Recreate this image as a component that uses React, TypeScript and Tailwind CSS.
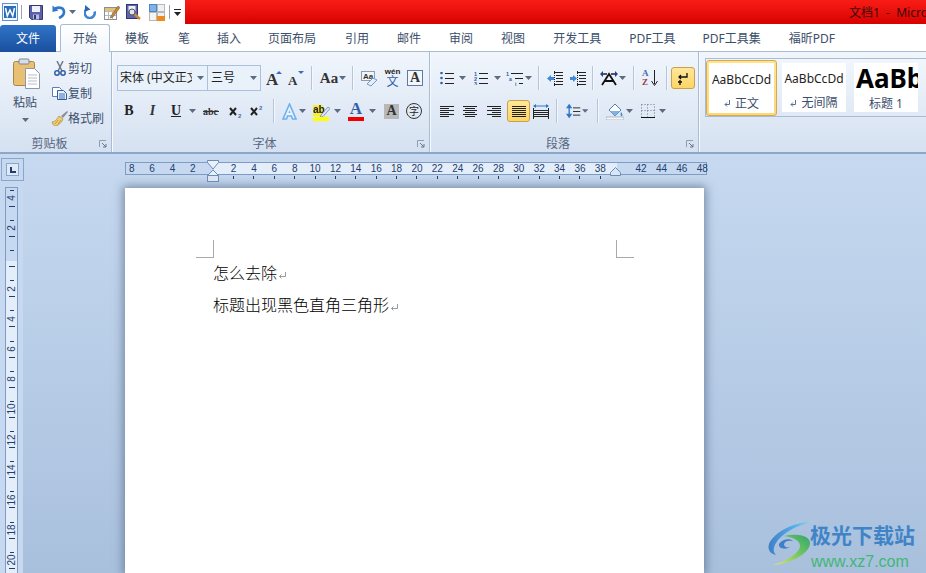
import React from "react";

type IconProps = { className?: string };

const Caret: React.FC<IconProps> = ({ className }) => (
  <svg width="7" height="4" viewBox="0 0 7 4" className={className}>
    <path d="M0 0h7L3.500 4z" fill="#5c6b80" />
  </svg>
);

const Sep: React.FC<IconProps> = ({ className }) => (
  <div className={`w-px h-[24px] bg-[#b6c6da] shadow-[1px_0_0_#f4f8fd] ${className}`} />
);

const WordIcon = () => (
  <svg width="16" height="18" viewBox="0 0 16 18" className="ml-[2px]">
    <rect x="0.500" y="0.500" width="15" height="17" fill="#f2f7fd" stroke="#5b93d3" />
    <rect x="2" y="3" width="12" height="12" fill="#2b6db8" />
    <path d="M3.500 5l1.800 8 2.700-6 2.700 6 1.800-8" fill="none" stroke="#fff" strokeWidth="1.500" />
  </svg>
);

const SaveIcon = () => (
  <svg width="14" height="15" viewBox="0 0 14 15" className="ml-[7px]">
    <path d="M0.500 0.500h13v14h-11l-2-2z" fill="#5a5fae" stroke="#33386f" />
    <rect x="3" y="1" width="8" height="6" fill="#eef0fb" />
    <rect x="4" y="9.500" width="6" height="5" fill="#b9bce0" />
    <rect x="5" y="10" width="2" height="4" fill="#33386f" />
  </svg>
);

const UndoIcon = () => (
  <svg width="14" height="14" viewBox="0 0 14 14" className="ml-[9px]">
    <path d="M3 3.500c5-2 9-.5 9 3.500s-3 5-5 6" fill="none" stroke="#2f78c9" strokeWidth="2.600" />
    <path d="M0.500 0.500l0 6.500 6-1.500z" fill="#2f78c9" />
  </svg>
);

const RedoIcon = () => (
  <svg width="13" height="14" viewBox="0 0 13 14" className="ml-[8px]">
    <path d="M3.500 3.500a5 5 0 1 0 7 3" fill="none" stroke="#3d86d4" strokeWidth="2.600" />
    <path d="M1 0v6.500l5.500-2z" fill="#2a66b0" />
  </svg>
);

const TableEditIcon = () => (
  <svg width="16" height="16" viewBox="0 0 16 16" className="ml-[7px]">
    <rect x="0.500" y="3.500" width="12" height="12" fill="#fff" stroke="#8a8f99" />
    <path d="M1 7.500h11M1 11.500h11M4.500 4v11M8.500 4v11" stroke="#b5bac2" />
    <rect x="1" y="4" width="11" height="3" fill="#e3c16f" />
    <path d="M7 12L14 2l2 1.500L9 13l-3 1z" fill="#c98b3a" stroke="#6b4a20" strokeWidth="0.500" />
  </svg>
);

const PreviewIcon = () => (
  <svg width="16" height="16" viewBox="0 0 16 16" className="ml-[6px]">
    <rect x="0.500" y="0.500" width="11" height="14" fill="#5f63ad" stroke="#33386f" />
    <rect x="2.500" y="2" width="7" height="5" fill="#eef0fb" />
    <path d="M5 7l9 8" stroke="#c98b3a" strokeWidth="2.500" />
    <circle cx="6" cy="8" r="3" fill="#dfe6f3" stroke="#555" />
  </svg>
);

const LayoutIcon = () => (
  <svg width="16" height="17" viewBox="0 0 16 17" className="ml-[7px]">
    <rect x="0.500" y="0.500" width="7" height="7" fill="#7fb2e6" stroke="#4d86c6" />
    <rect x="8.500" y="0.500" width="7" height="7" fill="#f0f0f0" stroke="#b8b8b8" />
    <rect x="0.500" y="8.500" width="7" height="8" fill="#f4f4f4" stroke="#b8b8b8" />
    <rect x="8.500" y="8.500" width="7" height="4" fill="#f0f0f0" stroke="#b8b8b8" />
    <rect x="8" y="12" width="8" height="5" fill="#f08a1d" />
  </svg>
);

const PasteIcon = () => (
  <svg width="27" height="31" viewBox="0 0 27 31">
    <rect x="0.500" y="3.500" width="21" height="24" rx="2" fill="#e9bf73" stroke="#a98645" />
    <rect x="6" y="1" width="10" height="5" rx="1" fill="#d8dde6" stroke="#7d8796" />
    <path d="M12.500 10.500h9l5 5v15h-14z" fill="#fff" stroke="#8e99a8" />
    <path d="M15 17h9M15 20h9M15 23h9M15 26h9" stroke="#b7bfca" />
  </svg>
);

const ScissorsIcon = () => (
  <svg width="12" height="15" viewBox="0 0 12 15">
    <path d="M3 0l5 10M9 0L4 10" stroke="#6f7887" strokeWidth="1.500" />
    <circle cx="3" cy="12" r="2.200" fill="none" stroke="#2f5fa8" strokeWidth="1.500" />
    <circle cx="9" cy="12" r="2.200" fill="none" stroke="#2f5fa8" strokeWidth="1.500" />
  </svg>
);

const CopyIcon = () => (
  <svg width="15" height="13" viewBox="0 0 15 13">
    <path d="M0.500 0.500h7l2 2v7h-9z" fill="#fff" stroke="#5e7fb0" />
    <path d="M5.500 3.500h6l3 3v6h-9z" fill="#eaf1fb" stroke="#2f5fa8" />
    <path d="M7 7h6M7 9h6M7 11h6" stroke="#3f6cb0" />
  </svg>
);

const BrushIcon = () => (
  <svg width="17" height="15" viewBox="0 0 17 15">
    <path d="M10 5l2 2 5-6-1-1z" fill="#8a8f99" />
    <path d="M1 11c3 0 5-3 7-6l4 3c-1 3-4 6-7 7-2 0-3-1-4-4z" fill="#f0cd6a" stroke="#a98645" strokeWidth="0.700" />
    <path d="M4 13l3-4M7 13l3-4" stroke="#a98645" strokeWidth="0.700" />
  </svg>
);

const Launcher: React.FC<IconProps> = ({ className }) => (
  <svg width="8" height="8" viewBox="0 0 8 8" className={className}>
    <path d="M0.500 7V0.500H7" fill="none" stroke="#8d9db3" />
    <path d="M3 3l4 4M7 4v3H4" fill="none" stroke="#66758a" />
  </svg>
);

const GlyphA: React.FC<{ text: string; className: string }> = ({ text, className }) => (
  <span className={`flex items-center justify-center leading-none font-bold [font-family:'Liberation_Serif',serif] ${className}`}>
    {text}
  </span>
);

const GrowIcon: React.FC<{ up: boolean; className: string; size: number }> = ({ up, className, size }) => (
  <svg width="16" height="16" viewBox="0 0 16 16" className={className}>
    <text x="0" y="15" fontSize={size} fontWeight="bold" fontFamily="Liberation Serif" fill="#333">
      A
    </text>
    <path d={up ? "M10 4l3-3 3 3z" : "M10 1h6l-3 3z"} fill="#3f6cb0" />
  </svg>
);

const EraserIcon: React.FC<IconProps> = ({ className }) => (
  <svg width="17" height="17" viewBox="0 0 17 17" className={className}>
    <rect x="0.500" y="1.500" width="13" height="9" fill="#f1f4f9" stroke="#8d9db3" />
    <text x="2" y="9" fontSize="8" fontWeight="bold" fontFamily="Liberation Sans" fill="#333">
      Aa
    </text>
    <path d="M6 14l6-6 4 2-6 6z" fill="#e9edf4" stroke="#6f9bd0" />
  </svg>
);

const WenIcon: React.FC<IconProps> = ({ className }) => (
  <div className={`w-[17px] h-[20px] flex flex-col items-center leading-none ${className}`}>
    <span className="text-[8px] h-[8px] leading-[8px] font-bold text-[#222] [font-family:'Liberation_Sans',sans-serif]">wén</span>
    <span className="text-[12px] h-[12px] leading-[12px] text-[#2f5fa8]">文</span>
  </div>
);

const BoxA: React.FC<IconProps> = ({ className }) => (
  <GlyphA text="A" className={`w-[16px] h-[16px] text-[14px] border border-[#5b7aa6] bg-[#f4f7fc] text-[#333] ${className}`} />
);

const Strike: React.FC<IconProps> = ({ className }) => (
  <svg width="16" height="12" viewBox="0 0 16 12" className={className}>
    <text x="0" y="10" fontSize="10" fontWeight="bold" fontFamily="Liberation Serif" fill="#333">
      abc
    </text>
    <path d="M0 6.500h16" stroke="#333" />
  </svg>
);

const ScriptIcon: React.FC<{ sup: boolean; className: string }> = ({ sup, className }) => (
  <svg width="14" height="13" viewBox="0 0 14 13" className={className}>
    <path d="M1 3l6 7M7 3l-6 7" stroke="#222" strokeWidth="2" />
    <text x="9" y={sup ? 5 : 13} fontSize="6" fontWeight="bold" fontFamily="Liberation Sans" fill="#3f6cb0">
      2
    </text>
  </svg>
);

const GlowA: React.FC<IconProps> = ({ className }) => (
  <svg width="15" height="17" viewBox="0 0 15 17" className={className}>
    <path d="M7.500 1L1 16h3.500l1-3h4l1 3H14z" fill="#e8f3fc" stroke="#6fb1ea" strokeWidth="1.600" />
    <path d="M6.500 10l1-3 1 3z" fill="#6fb1ea" />
  </svg>
);

const HighlightIcon: React.FC<IconProps> = ({ className }) => (
  <svg width="17" height="20" viewBox="0 0 17 20" className={className}>
    <rect x="0" y="4" width="10" height="11" fill="#f4ef3d" />
    <text x="0" y="12" fontSize="10" fontWeight="bold" fontFamily="Liberation Sans" fill="#222">
      ab
    </text>
    <path d="M8 14l7-8 2 1.500-7 8-3 1z" fill="#dfe8f4" stroke="#5b7aa6" strokeWidth="0.700" />
    <rect x="0" y="16" width="16" height="4" fill="#ffff00" />
  </svg>
);

const ColorA: React.FC<IconProps> = ({ className }) => (
  <div className={`w-[16px] h-[20px] flex flex-col items-center ${className}`}>
    <GlyphA text="A" className="w-[16px] h-[15px] text-[17px] text-[#2f5fa8]" />
    <div className="w-[16px] h-[4px] mt-px bg-[#f00000]" />
  </div>
);

const GreyA: React.FC<IconProps> = ({ className }) => (
  <GlyphA text="A" className={`w-[15px] h-[15px] text-[14px] bg-[#b8b8b8] text-[#333] ${className}`} />
);

const CircleChar: React.FC<IconProps> = ({ className }) => (
  <div className={`w-[16px] h-[16px] rounded-full border-[1.500px] border-[#333] flex items-center justify-center text-[10px] leading-none text-[#222] ${className}`}>
    字
  </div>
);

const Lines: React.FC<{ rows: number[][]; className?: string; w?: number }> = ({ rows, className, w = 14 }) => (
  <svg width={w} height="11" viewBox={`0 0 ${w} 11`} className={className}>
    {rows.map(([y, x1, x2]) => (
      <path key={y} d={`M${x1} ${y + 0.5}H${x2}`} stroke="#222" />
    ))}
  </svg>
);

const ListIcon: React.FC<{ kind: "bullet" | "number"; className: string }> = ({ kind, className }) => (
  <svg width="14" height="13" viewBox="0 0 14 13" className={className}>
    {[1, 6, 11].map((y, i) =>
      kind === "bullet" ? (
        <circle key={y} cx="1.500" cy={y} r="1.300" fill="#2f5fa8" />
      ) : (
        <text key={y} x="0" y={y + 2.5} fontSize="5.500" fontWeight="bold" fontFamily="Liberation Sans" fill="#2f5fa8">
          {i + 1}
        </text>
      ),
    )}
    <path d="M5 1.500h9M5 6.500h9M5 11.500h9" stroke="#222" />
  </svg>
);

const MultiList: React.FC<IconProps> = ({ className }) => (
  <svg width="18" height="15" viewBox="0 0 18 15" className={className}>
    <text x="0" y="5" fontSize="5.500" fontWeight="bold" fontFamily="Liberation Sans" fill="#2f5fa8">
      1
    </text>
    <text x="3" y="10" fontSize="5" fontWeight="bold" fontFamily="Liberation Sans" fill="#2f5fa8">
      a
    </text>
    <text x="9" y="15" fontSize="5" fontWeight="bold" fontFamily="Liberation Sans" fill="#2f5fa8">
      i
    </text>
    <path d="M5 2.500h12M9 7.500h8M13 12.500h4" stroke="#222" />
  </svg>
);

const IndentIcon: React.FC<{ dir: "left" | "right"; className: string }> = ({ dir, className }) => (
  <svg width="16" height="15" viewBox="0 0 16 15" className={className}>
    <path d="M7 1.500h9M9 4.500h7M9 7.500h7M9 10.500h7M7 13.500h9" stroke="#222" />
    <path d="M7.500 0v15" stroke="#222" strokeDasharray="1 1" />
    {dir === "left" ? (
      <path d="M0 7.500l4-3.500v2h3v3H4v2z" fill="#3f8ad6" />
    ) : (
      <path d="M7 7.500L3 4v2H0v3h3v2z" fill="#3f8ad6" />
    )}
  </svg>
);

const TextDirIcon: React.FC<IconProps> = ({ className }) => (
  <svg width="18" height="15" viewBox="0 0 18 15" className={className}>
    <path d="M3 3h4M11 3h4" stroke="#222" strokeWidth="1.500" />
    <path d="M0 3l3-3v6zM18 3l-3-3v6z" fill="#1f3f9a" />
    <path d="M2 14L9 3l7 11M5 10h8" fill="none" stroke="#111" strokeWidth="1.800" />
  </svg>
);

const SortIcon: React.FC<IconProps> = ({ className }) => (
  <div className={`w-[16px] h-[18px] flex items-center ${className}`}>
    <div className="flex flex-col w-[8px] text-[9px] leading-[9px] font-bold [font-family:'Liberation_Serif',serif]">
      <span className="text-[#3f6cb0]">A</span>
      <span className="text-[#a33b3b]">Z</span>
    </div>
    <svg width="7" height="16" viewBox="0 0 7 16" className="ml-px">
      <path d="M3.500 0v14" stroke="#222" />
      <path d="M0.500 11l3 4.500 3-4.500" fill="none" stroke="#222" />
    </svg>
  </div>
);

const ActiveButton: React.FC<{ className: string; children: React.ReactNode }> = ({ className, children }) => (
  <div className={`rounded-[3px] border border-[#c9a04e] bg-linear-to-b from-[#ffe79a] to-[#fdd563] flex items-center justify-center ${className}`}>
    {children}
  </div>
);

const SpacingIcon: React.FC<IconProps> = ({ className }) => (
  <div className={`w-[22px] h-[16px] flex items-center ${className}`}>
    <svg width="7" height="16" viewBox="0 0 7 16">
      <path d="M3.500 2v12" stroke="#2f78c9" strokeWidth="1.500" />
      <path d="M0 5l3.500-5L7 5zM0 11l3.500 5L7 11z" fill="#2f78c9" />
    </svg>
    <svg width="8" height="9" viewBox="0 0 8 9" className="ml-[1px]">
      <path d="M0 .5h8M0 4.500h8M0 8.500h8" stroke="#222" />
    </svg>
    <Caret className="ml-[1px]" />
  </div>
);

const PaintIcon: React.FC<IconProps> = ({ className }) => (
  <svg width="18" height="17" viewBox="0 0 18 17" className={className}>
    <path d="M3 7l6-6 6 6-6 6z" fill="#fff" stroke="#5b7aa6" />
    <path d="M4 8h10l-5 5z" fill="#7fb2e6" />
    <path d="M15 9c1.500 2 2 3 1 4s-2-1-1-4z" fill="#3f8ad6" />
    <rect x="0" y="14" width="18" height="3" fill="#f5f5f5" stroke="#9aa4b1" strokeWidth="0.700" />
  </svg>
);

const BorderIcon: React.FC<IconProps> = ({ className }) => (
  <svg width="14" height="14" viewBox="0 0 14 14" className={className}>
    <path d="M.5 .5h13v13h-13zM6.500 .5v13M.5 6.500h13" fill="none" stroke="#6a7787" strokeDasharray="1 2" />
    <path d="M0 13.500h14" stroke="#111" />
  </svg>
);

const Group: React.FC<{ label: string; width: string; children: React.ReactNode }> = ({ label, width, children }) => (
  <div className={`flex flex-col h-full border-r border-[#a9bcd6] shadow-[1px_0_0_#f6f9fd] ${width}`}>
    <div className="flex-1 min-h-0">{children}</div>
    <div className="h-[22px] pt-[5px] flex items-center">
      <span className="flex-1 text-center text-[12px] leading-[17px] text-[#56667e]">{label}</span>
      <Launcher className="mr-[4px] shrink-0" />
    </div>
  </div>
);

const ClipItem: React.FC<{ icon: React.ReactNode; label: string }> = ({ icon, label }) => (
  <div className="h-[25px] flex items-center">
    <div className="w-[17px] flex justify-center shrink-0">{icon}</div>
    <span className="text-[12px] text-[#3b4e6b] whitespace-nowrap">{label}</span>
  </div>
);

const tabs: [string, string][] = [
  ["模板", "ml-[15px]"],
  ["笔", "ml-[29px]"],
  ["插入", "ml-[27px]"],
  ["页面布局", "ml-[27px]"],
  ["引用", "ml-[29px]"],
  ["邮件", "ml-[28px]"],
  ["审阅", "ml-[28px]"],
  ["视图", "ml-[28px]"],
  ["开发工具", "ml-[28px]"],
  ["PDF工具", "ml-[28px]"],
  ["PDF工具集", "ml-[27px]"],
  ["福昕PDF", "ml-[28px]"],
];

const hLabels = [8, 6, 4, 2, 0, 2, 4, 6, 8, 10, 12, 14, 16, 18, 20, 22, 24, 26, 28, 30, 32, 34, 36, 38, 40, 42, 44, 46, 48];
const vLabels = [4, 2, 0, 2, 4, 6, 8, 10, 12, 14, 16, 18, 20, 22];

const Cell: React.FC<{ n: number; i: number }> = ({ n, i }) => {
  const blank = i === 4 || i === 24;
  const tick = i > 4 && i < 24;
  return (
    <div className="w-[20.38px] shrink-0 flex flex-col items-center">
      <span className="h-[13px] text-[10px] leading-[13px] text-[#1f3d6d] [font-family:'Liberation_Sans',sans-serif]">{blank ? "" : n}</span>
      {tick && <div className="w-px h-[3px] mt-[1px] bg-[#1f3d6d]" />}
    </div>
  );
};

const VCell: React.FC<{ n: number; i: number }> = ({ n, i }) => (
  <div className="h-[30.2px] shrink-0 flex flex-col items-center justify-center">
    <div className="w-[4px] h-px bg-[#1f3d6d]" />
    <span className="h-[14px] w-[13px] my-[0.5px] flex items-center justify-center -rotate-90 text-[10px] leading-none text-[#1f3d6d] [font-family:'Liberation_Sans',sans-serif]">
      {i === 2 ? "" : n}
    </span>
    <div className="w-[6px] h-px bg-[#1f3d6d]" />
  </div>
);

const ParaMark = () => (
  <svg width="9" height="9" viewBox="0 0 9 9" className="inline-block align-[-1px] ml-px">
    <path d="M7.500 1v4.500H1.500M3.500 3.500l-2 2 2 2" fill="none" stroke="#9a9a9a" />
  </svg>
);

const StyleLabelMark = () => (
  <svg width="7" height="8" viewBox="0 0 7 8" className="inline-block mr-[4px]">
    <path d="M5.500 0v4.500H1M3 2.500L1 4.500l2 2" fill="none" stroke="#58708f" />
  </svg>
);

const Logo = () => (
  <svg width="50" height="46" viewBox="0 0 50 46">
    <defs>
      <linearGradient id="lg1" x1="0" y1="0" x2="1" y2="0">
        <stop offset="0" stopColor="#3f7fc8" />
        <stop offset="0.6" stopColor="#55b4ea" />
        <stop offset="1" stopColor="#b8d4ea" />
      </linearGradient>
      <linearGradient id="lg2" x1="0" y1="1" x2="1" y2="0">
        <stop offset="0" stopColor="#e3e27a" />
        <stop offset="0.5" stopColor="#79c95e" />
        <stop offset="1" stopColor="#2fa56f" />
      </linearGradient>
    </defs>
    <path d="M48 1C28 2 8 11 2 24c-2 6 2 10 7 11-3-3-3-7 0-12C15 13 30 5 48 1z" fill="url(#lg1)" />
    <path d="M12 24c3-5 11-6 14-3-5-1-8 0-9 3 0 3 3 4 6 3-4 3-12 2-11-3z" fill="#3f7fc8" />
    <path d="M17 16c12-3 27-1 26 8-1 10-20 20-37 21 13-4 26-11 27-19 0-6-8-9-16-10z" fill="url(#lg2)" />
  </svg>
);

export default function App() {
  return (
    <div className="w-[926px] h-[573px] overflow-hidden flex flex-col relative bg-white text-[#222] [font-family:'Noto_Sans','Noto_Sans_CJK_SC',sans-serif]">
      {/* title bar */}
      <div className="h-[24px] flex shrink-0">
        <div className="w-[185px] flex items-center shrink-0 bg-white">
          <WordIcon />
          <div className="w-px h-[14px] ml-[3px] bg-[#9aa4b1]" />
          <SaveIcon />
          <UndoIcon />
          <Caret className="ml-[3px]" />
          <RedoIcon />
          <TableEditIcon />
          <PreviewIcon />
          <LayoutIcon />
          <div className="w-px h-[14px] ml-[4px] bg-[#9aa4b1]" />
          <svg width="7" height="7" viewBox="0 0 7 7" className="ml-[4px]">
            <path d="M0 3h7L3.500 7z" fill="#222" />
            <path d="M0 .5h7" stroke="#222" />
          </svg>
        </div>
        <div className="flex-1 bg-linear-to-b from-[#f91c16] to-[#d80000] overflow-hidden whitespace-nowrap pl-[664px] text-[12px] leading-[25px] text-[#3d0a06]">
          文档1&nbsp;&nbsp;-&nbsp;&nbsp;Microsoft Word
        </div>
      </div>

      {/* tabs */}
      <div className="h-[28px] flex items-end shrink-0 relative z-10 border-b border-[#a9bcd6] text-[12px] text-[#3b4e6b]">
        <div className="w-[56px] h-[27px] -mb-px rounded-t-[3px] bg-linear-to-b from-[#2f74c6] to-[#1b4f9f] text-white text-center leading-[28px]">文件</div>
        <div className="w-[50px] h-[28px] -mb-px ml-[4px] rounded-t-[3px] border border-b-0 border-[#a9bcd6] bg-linear-to-b from-white to-[#f0f5fb] text-center leading-[28px]">开始</div>
        {tabs.map(([t, cls]) => (
          <span key={t} className={`leading-[25px] whitespace-nowrap ${cls}`}>
            {t}
          </span>
        ))}
      </div>

      {/* ribbon */}
      <div className="h-[102px] shrink-0 flex border-b-2 border-[#8ea7c7] bg-linear-to-b from-[#f1f6fc] to-[#d5e1f1]">
        <Group label="剪贴板" width="w-[112px]">
          <div className="flex">
            <div className="w-[50px] flex flex-col items-center">
              <div className="mt-[6px] ml-[2px]">
                <PasteIcon />
              </div>
              <span className="mt-[5px] text-[12px] leading-[18px] text-[#3b4e6b]">粘贴</span>
              <Caret className="mt-[6px]" />
            </div>
            <div className="flex flex-col mt-[4px] ml-[1px]">
              <ClipItem icon={<ScissorsIcon />} label="剪切" />
              <ClipItem icon={<CopyIcon />} label="复制" />
              <ClipItem icon={<BrushIcon />} label="格式刷" />
            </div>
          </div>
        </Group>

        <Group label="字体" width="w-[318px]">
          <div className="h-[26px] mt-[13px] flex items-center">
            <div className="ml-[5px] w-[91px] h-[26px] flex items-center border border-[#abc0dc] bg-[#e9f1fa] pl-[2px] text-[12px] text-[#222]">
              <span className="w-[72px] overflow-hidden whitespace-nowrap">宋体 (中文正文)</span>
              <Caret className="ml-[5px]" />
            </div>
            <div className="w-[53px] h-[26px] flex items-center border border-l-0 border-[#abc0dc] bg-[#e9f1fa] pl-[3px] text-[12px] text-[#222]">
              <span className="w-[39px]">三号</span>
              <Caret />
            </div>
            <GrowIcon up className="ml-[5px]" size={17} />
            <GrowIcon up={false} className="ml-[6px]" size={13} />
            <Sep className="ml-[7px]" />
            <GlyphA text="Aa" className="ml-[8px] w-[18px] text-[15px] text-[#333]" />
            <Caret className="ml-px" />
            <Sep className="ml-[6px]" />
            <EraserIcon className="ml-[8px]" />
            <WenIcon className="ml-[6px]" />
            <BoxA className="ml-[6px]" />
          </div>
          <div className="h-[24px] mt-[8px] flex items-center">
            <GlyphA text="B" className="ml-[11px] w-[12px] text-[14px] text-[#222]" />
            <GlyphA text="I" className="ml-[12px] w-[11px] text-[14px] italic text-[#333]" />
            <GlyphA text="U" className="ml-[12px] w-[12px] text-[14px] underline text-[#222]" />
            <Caret className="ml-[7px]" />
            <Strike className="ml-[7px]" />
            <ScriptIcon sup={false} className="ml-[10px]" />
            <ScriptIcon sup className="ml-[7px]" />
            <Sep className="ml-[9px]" />
            <GlowA className="ml-[8px]" />
            <Caret className="ml-[2px]" />
            <HighlightIcon className="ml-[7px]" />
            <Caret className="ml-[4px]" />
            <ColorA className="ml-[7px]" />
            <Caret className="ml-[5px]" />
            <GreyA className="ml-[8px]" />
            <CircleChar className="ml-[7px]" />
          </div>
        </Group>

        <Group label="段落" width="w-[269px]">
          <div className="h-[26px] mt-[13px] flex items-center">
            <ListIcon kind="bullet" className="ml-[10px]" />
            <Caret className="ml-[5px]" />
            <ListIcon kind="number" className="ml-[8px]" />
            <Caret className="ml-[6px]" />
            <MultiList className="ml-[5px]" />
            <Caret className="ml-px" />
            <Sep className="ml-[6px]" />
            <IndentIcon dir="left" className="ml-[8px]" />
            <IndentIcon dir="right" className="ml-[7px]" />
            <Sep className="ml-[6px]" />
            <TextDirIcon className="ml-[7px]" />
            <Caret className="ml-px" />
            <Sep className="ml-[7px]" />
            <SortIcon className="ml-[8px]" />
            <Sep className="ml-[8px]" />
            <ActiveButton className="ml-[4px] w-[24px] h-[22px]">
              <svg width="12" height="13" viewBox="0 0 12 13">
                <path d="M10 1v4H2M4 3L2 5l2 2M3 8v5M1 10h4" fill="none" stroke="#111" strokeWidth="1.300" />
              </svg>
            </ActiveButton>
          </div>
          <div className="h-[24px] mt-[8px] flex items-center">
            <Lines className="ml-[10px]" rows={[[0, 0, 14], [2, 0, 9], [4, 0, 14], [6, 0, 9], [8, 0, 14], [10, 0, 9]]} />
            <Lines className="ml-[9px]" rows={[[0, 0, 14], [2, 2, 12], [4, 0, 14], [6, 2, 12], [8, 0, 14], [10, 2, 12]]} />
            <Lines className="ml-[10px]" rows={[[0, 0, 14], [2, 5, 14], [4, 0, 14], [6, 5, 14], [8, 0, 14], [10, 5, 14]]} />
            <ActiveButton className="ml-[6px] w-[23px] h-[22px]">
              <Lines rows={[[0, 0, 14], [2, 0, 14], [4, 0, 14], [6, 0, 14], [8, 0, 14], [10, 0, 14]]} />
            </ActiveButton>
            <svg width="16" height="15" viewBox="0 0 16 15" className="ml-[3px]">
              <path d="M1 2h14" stroke="#2f78c9" />
              <path d="M0 2l3-2v4zM16 2l-3-2v4z" fill="#2f78c9" />
              <path d="M1 6.500h14M1 8.500h14M1 10.500h14M1 12.500h14M0.500 4v11M15.500 4v11" stroke="#222" />
            </svg>
            <Sep className="ml-[7px]" />
            <SpacingIcon className="ml-[9px]" />
            <Sep className="ml-[9px]" />
            <PaintIcon className="ml-[8px]" />
            <Caret className="ml-[2px]" />
            <BorderIcon className="ml-[8px]" />
            <Caret className="ml-[4px]" />
          </div>
        </Group>

        <div className="flex-1 pl-[6px] pt-[6px] min-w-0">
          <div className="h-[59px] flex items-center border border-r-0 border-[#a9bcd6] bg-linear-to-b from-[#f1f6fc] to-[#dfe9f5] overflow-hidden">
            <div className="w-[71px] h-[56px] rounded-[3px] border border-[#d7a94f] bg-linear-to-b from-[#ffe38f] to-[#fdd878] p-[2px] shrink-0">
              <div className="h-full flex flex-col items-center bg-white">
                <span className="mt-[8px] h-[17px] text-[12px] leading-[17px]">AaBbCcDd</span>
                <span className="mt-[7px] text-[12px] leading-[17px] text-[#3b4e6b]">
                  <StyleLabelMark />
                  正文
                </span>
              </div>
            </div>
            <div className="w-[64px] h-[49px] ml-[5px] flex flex-col items-center bg-white shrink-0">
              <span className="mt-[7px] h-[17px] text-[12px] leading-[17px]">AaBbCcDd</span>
              <span className="mt-[7px] text-[12px] leading-[17px] text-[#3b4e6b]">
                <StyleLabelMark />
                无间隔
              </span>
            </div>
            <div className="w-[64px] h-[49px] ml-[8px] flex flex-col items-center bg-white shrink-0 overflow-hidden">
              <span className="h-[27px] self-start pl-[2px] text-[26px] leading-[30px] font-bold whitespace-nowrap text-black">AaBbCc</span>
              <span className="mt-[5px] text-[12px] leading-[17px] text-[#3b4e6b]">标题 1</span>
            </div>
          </div>
        </div>
      </div>

      {/* document area */}
      <div className="flex-1 min-h-0 flex relative bg-linear-to-b from-[#c6d9f0] to-[#a9c0dd]">
        <div className="w-[23px] shrink-0 flex flex-col bg-[#c6d9f0]">
          <div className="w-[23px] h-[23px] mt-[4px] ml-px border border-[#8aa6cb] flex items-center justify-center">
            <div className="w-[13px] h-[13px] border border-[#8aa6cb] bg-[#dfeaf8] flex items-center justify-center">
              <div className="w-[6px] h-[6px] border-l-2 border-b-2 border-[#1f3d6d]" />
            </div>
          </div>
          <div className="w-[13px] flex-1 mt-[6px] ml-[5px] overflow-hidden border-x border-t border-[#7f9cc4] bg-[linear-gradient(to_bottom,#c6d9f1_73px,#e4eefa_73px)]">
            <div className="flex flex-col items-center mt-[-5px]">
              {vLabels.map((n, i) => (
                <VCell key={i} n={n} i={i} />
              ))}
            </div>
          </div>
        </div>

        <div className="flex-1 min-w-0 flex flex-col">
          <div className="h-[13px] w-[582px] mt-[8px] ml-[102px] border border-[#7f9cc4] bg-[linear-gradient(to_right,#c6d9f1_88px,#e4eefa_88px,#e4eefa_491px,#c6d9f1_491px)] shrink-0">
            <div className="flex ml-[-4.5px] mt-[-1px]">
              {hLabels.map((n, i) => (
                <Cell key={i} n={n} i={i} />
              ))}
            </div>
          </div>
          <div className="w-[579px] flex-1 mt-[13px] ml-[102px] bg-white shadow-[0_0_9px_2px_rgba(70,90,120,0.6)]">
            <div className="flex justify-between pt-[52px] pl-[71px] pr-[70px]">
              <div className="w-[18px] h-[18px] border-r border-b border-[#aaaaaa]" />
              <div className="w-[18px] h-[18px] border-l border-b border-[#aaaaaa]" />
            </div>
            <div className="pl-[88px] mt-[-2px] text-[16px] leading-[32px] text-black font-light [font-family:'Noto_Sans_CJK_SC',sans-serif]">
              <p>
                怎么去除
                <ParaMark />
              </p>
              <p>
                标题出现黑色直角三角形
                <ParaMark />
              </p>
            </div>
          </div>
        </div>

        {/* ruler markers */}
        <svg width="12" height="22" viewBox="0 0 12 22" className="absolute left-[207px] top-[6px]">
          <path d="M.5 .5h11v2L6 9 .5 2.500zM.5 15.500 6 10l5.500 5.500z" fill="#eaf1fb" stroke="#6b8bb8" />
          <rect x=".5" y="15.500" width="11" height="6" fill="#dbe6f5" stroke="#6b8bb8" />
        </svg>
        <svg width="11" height="9" viewBox="0 0 11 9" className="absolute left-[610px] top-[13px]">
          <path d="M.5 8.500v-3l5-5 5 5v3z" fill="#dbe6f5" stroke="#6b8bb8" />
        </svg>

        {/* watermark */}
        <div className="absolute left-[767px] top-[366px] flex">
          <Logo />
          <div className="flex flex-col ml-[-7px] mt-[1px]">
            <span className="text-[21px] leading-[26px] font-bold text-[#3f84c6] whitespace-nowrap [font-family:'Noto_Sans_CJK_SC',sans-serif]">极光下载站</span>
            <span className="text-[16px] leading-[20px] mt-[5px] ml-[1px] text-[#3fb776] whitespace-nowrap [font-family:'Liberation_Sans',sans-serif]">www.xz7.com</span>
          </div>
        </div>
      </div>
    </div>
  );
}
